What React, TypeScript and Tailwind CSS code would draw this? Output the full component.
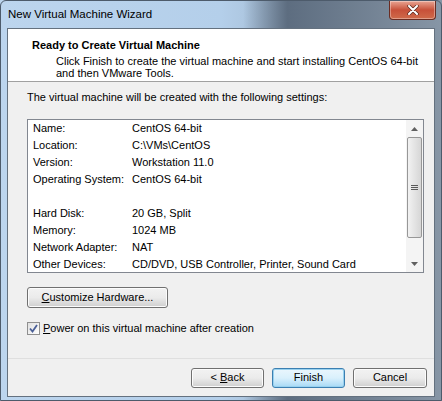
import React from 'react';

const rowsTop = [
  ['Name:', 'CentOS 64-bit'],
  ['Location:', 'C:\\VMs\\CentOS'],
  ['Version:', 'Workstation 11.0'],
  ['Operating System:', 'CentOS 64-bit'],
];

const rowsBottom = [
  ['Hard Disk:', '20 GB, Split'],
  ['Memory:', '1024 MB'],
  ['Network Adapter:', 'NAT'],
  ['Other Devices:', 'CD/DVD, USB Controller, Printer, Sound Card'],
];

function WinButton({
  children,
  focused = false,
  className = '',
}: {
  children: React.ReactNode;
  focused?: boolean;
  className?: string;
}) {
  return (
    <div
      className={`flex items-center justify-center rounded-[3px] border text-black whitespace-nowrap ${
        focused
          ? 'border-[#3c7fb1] bg-gradient-to-b from-[#eaf6fd] via-[#d9f0fc] to-[#a7d9f5] shadow-[inset_0_0_0_1px_#98d1ef]'
          : 'border-[#707070] bg-gradient-to-b from-[#f2f2f2] via-[#ebebeb] to-[#cfcfcf] shadow-[inset_0_0_0_1px_#fcfcfc]'
      } ${className}`}
    >
      {children}
    </div>
  );
}

function Row({ k, v }: { k: string; v: string }) {
  return (
    <div className="flex h-[17px] items-center">
      <div className="w-[99px] shrink-0">{k}</div>
      <div>{v}</div>
    </div>
  );
}

export default function App() {
  return (
    <div
      className="w-[442px] h-[401px] relative overflow-hidden bg-gradient-to-r from-[#bcd5ee] via-[#b4cfea] to-[#7b8b9c]"
      style={{ fontFamily: '"Liberation Sans", Arial, sans-serif' }}
    >
      {/* glass streaks */}
      <div className="absolute inset-0 bg-gradient-to-r from-transparent from-[55%] via-[#5d6d80] via-[65%] to-[#8796a6]" />

      <div className="relative flex flex-col h-full rounded-t-[6px] border border-[#4d5b6b]">
        {/* Title bar */}
        <div className="h-[27px] shrink-0 flex items-start justify-between">
          <div className="pl-[7px] pt-[8px] text-[11.5px] text-black leading-none whitespace-nowrap">New Virtual Machine Wizard</div>
          <div className="mr-[5px] w-[47px] h-[19px] rounded-b-[4px] border border-t-0 border-[#6a2c22] bg-gradient-to-b from-[#e8a493] via-[#c75039] to-[#cf6a4a] flex items-center justify-center shadow-[inset_0_0_0_1px_rgba(255,255,255,0.35)]">
            <svg width="12" height="10" viewBox="0 0 12 10">
              <path d="M2 1 L10 9 M10 1 L2 9" stroke="#5a2a20" strokeWidth="3.4" strokeLinecap="round" />
              <path d="M2 1 L10 9 M10 1 L2 9" stroke="#ffffff" strokeWidth="2" strokeLinecap="round" />
            </svg>
          </div>
        </div>

        {/* Client area */}
        <div className="mx-[6px] flex-1 mb-[3px] flex flex-col border border-[#64717f] bg-[#f0f0f0] text-[11px] text-black">
          {/* Header */}
          <div className="bg-white h-[53px] shrink-0 border-b border-[#a0a0a0] pt-[9px]">
            <div className="pl-[24px] font-bold leading-[14px] whitespace-nowrap">Ready to Create Virtual Machine</div>
            <div className="pl-[48px] leading-[12px] pt-[3px] whitespace-nowrap">
              Click Finish to create the virtual machine and start installing CentOS 64-bit
              <br />
              and then VMware Tools.
            </div>
          </div>

          {/* Body */}
          <div className="flex-1 flex flex-col pl-[19px] pr-[10px] pt-[8px]">
            <div className="leading-[14px] whitespace-nowrap">The virtual machine will be created with the following settings:</div>

            <div className="mt-[15px] h-[154px] shrink-0 border border-[#828790] bg-white flex overflow-hidden">
              <div className="flex-1 pl-[5px] whitespace-nowrap">
                {rowsTop.map(([k, v]) => (
                  <Row key={k} k={k} v={v} />
                ))}
                <div className="h-[17px]" />
                {rowsBottom.map(([k, v]) => (
                  <Row key={k} k={k} v={v} />
                ))}
              </div>

              {/* Scrollbar */}
              <div className="w-[17px] shrink-0 flex flex-col bg-[#f4f4f4]">
                <div className="h-[17px] shrink-0 flex items-center justify-center">
                  <svg width="7" height="4" viewBox="0 0 7 4"><path d="M0 4 L3.5 0 L7 4 Z" fill="#606060" /></svg>
                </div>
                <div className="mx-[1px] h-[101px] shrink-0 rounded-[2px] border border-[#979797] bg-gradient-to-r from-[#f2f2f2] to-[#d6d6d6] flex items-center justify-center">
                  <svg width="7" height="7" viewBox="0 0 7 7">
                    <path d="M0 1.5 H7 M0 3.5 H7 M0 5.5 H7" stroke="#5a5a5a" strokeWidth="1" />
                  </svg>
                </div>
                <div className="flex-1" />
                <div className="h-[17px] shrink-0 flex items-center justify-center">
                  <svg width="7" height="4" viewBox="0 0 7 4"><path d="M0 0 L3.5 4 L7 0 Z" fill="#606060" /></svg>
                </div>
              </div>
            </div>

            <div className="mt-[14px] flex">
              <WinButton className="w-[141px] h-[21px]">
                <span>
                  <span className="underline">C</span>ustomize Hardware...
                </span>
              </WinButton>
            </div>

            <div className="mt-[13px] h-[14px] flex items-center gap-[3px]">
              <div className="w-[13px] h-[13px] border border-[#8f8f8f] bg-gradient-to-br from-[#e0e0e0] to-[#ffffff] flex items-center justify-center">
                <svg width="9" height="9" viewBox="0 0 9 9">
                  <path d="M1 4.5 L3.5 7.5 L8 1" fill="none" stroke="#4a5f97" strokeWidth="1.8" />
                </svg>
              </div>
              <div className="leading-[14px] whitespace-nowrap">
                <span className="underline">P</span>ower on this virtual machine after creation
              </div>
            </div>
          </div>

          {/* Footer */}
          <div className="h-[38px] shrink-0 border-t border-[#dfdfdf] flex items-center justify-end gap-[8px] pr-[7px]">
            <WinButton className="w-[73px] h-[20px]">
              <span>
                &lt; <span className="underline">B</span>ack
              </span>
            </WinButton>
            <WinButton focused className="w-[73px] h-[20px]">Finish</WinButton>
            <WinButton className="w-[74px] h-[20px]">Cancel</WinButton>
          </div>
        </div>
      </div>
    </div>
  );
}
